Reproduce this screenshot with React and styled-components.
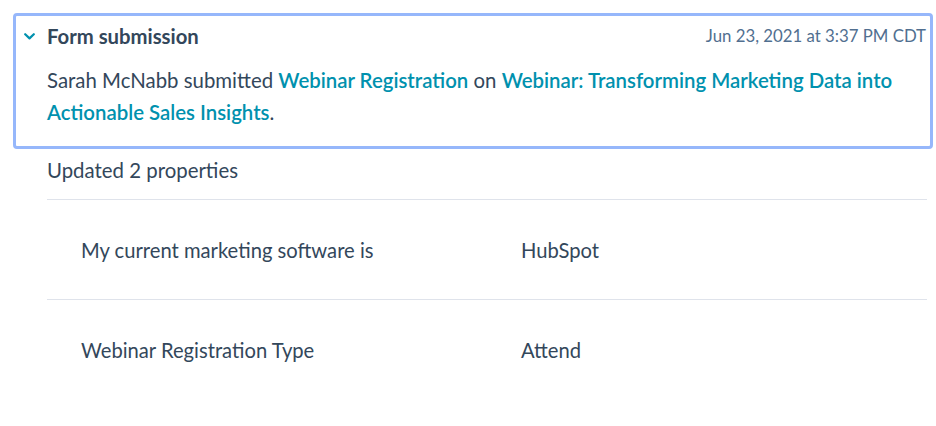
import React from "react";
import styled, { createGlobalStyle } from "styled-components";

const GlobalStyle = createGlobalStyle`
  html, body { margin: 0; padding: 0; background: #ffffff; }
  body { font-family: Lato, "Open Sans", sans-serif; color: #33475b; }
  * { box-sizing: border-box; }
`;

const Page = styled.div`
  width: 936px;
  padding: 13px 3px 0 13px;
`;

const Card = styled.section`
  border: 3px solid #96b7fb;
  border-radius: 4px;
  padding: 8px 4px 18px 4px;
`;

const Header = styled.div`
  display: flex;
  align-items: center;
  height: 24px;
`;

const Toggle = styled.span`
  width: 27px;
  height: 24px;
  display: flex;
  align-items: center;
  padding-left: 4px;
  color: #0091ae;
`;

const Title = styled.h3`
  margin: 0;
  flex: 1;
  font-size: 20.3px;
  line-height: 24px;
  font-weight: 700;
  color: #33475b;
`;

const Timestamp = styled.span`
  font-size: 16.8px;
  line-height: 24px;
  color: #516f90;
`;

const Body = styled.p`
  margin: 16px 0 0 27px;
  font-size: 20.4px;
  line-height: 32px;
  color: #33475b;
`;

const Link = styled.a`
  color: #0091ae;
  font-weight: 600;
  text-decoration: none;
`;

const Changes = styled.div`
  margin: 9px 6px 0 34px;
`;

const Summary = styled.div`
  font-size: 20.4px;
  line-height: 24px;
  padding-bottom: 17px;
  border-bottom: 1px solid #dfe3eb;
`;

const Row = styled.div`
  display: grid;
  grid-template-columns: 1fr 1fr;
  align-items: center;
  height: 100px;
  border-bottom: 1px solid ${(p) => (p.$last ? "transparent" : "#dfe3eb")};
`;

const Cell = styled.div`
  padding-left: 34px;
  font-size: 20.2px;
  line-height: 24px;
  color: #33475b;
`;

const Chevron = () => (
  <svg width="11" height="7" viewBox="0 0 11 7" fill="none">
    <path
      d="M1.2 1.2 L5.5 5.4 L9.8 1.2"
      stroke="currentColor"
      strokeWidth="2.2"
      strokeLinecap="round"
      strokeLinejoin="round"
    />
  </svg>
);

const properties = [
  { label: "My current marketing software is", value: "HubSpot" },
  { label: "Webinar Registration Type", value: "Attend" },
];

export default function App() {
  return (
    <Page>
      <GlobalStyle />
      <Card>
        <Header>
          <Toggle>
            <Chevron />
          </Toggle>
          <Title>Form submission</Title>
          <Timestamp>Jun 23, 2021 at 3:37 PM CDT</Timestamp>
        </Header>
        <Body>
          Sarah McNabb submitted <Link href="#">Webinar Registration</Link> on{" "}
          <Link href="#">
            Webinar: Transforming Marketing Data into Actionable Sales Insights
          </Link>
          .
        </Body>
      </Card>
      <Changes>
        <Summary>Updated 2 properties</Summary>
        {properties.map((p, i) => (
          <Row key={p.label} $last={i === properties.length - 1}>
            <Cell>{p.label}</Cell>
            <Cell>{p.value}</Cell>
          </Row>
        ))}
      </Changes>
    </Page>
  );
}
